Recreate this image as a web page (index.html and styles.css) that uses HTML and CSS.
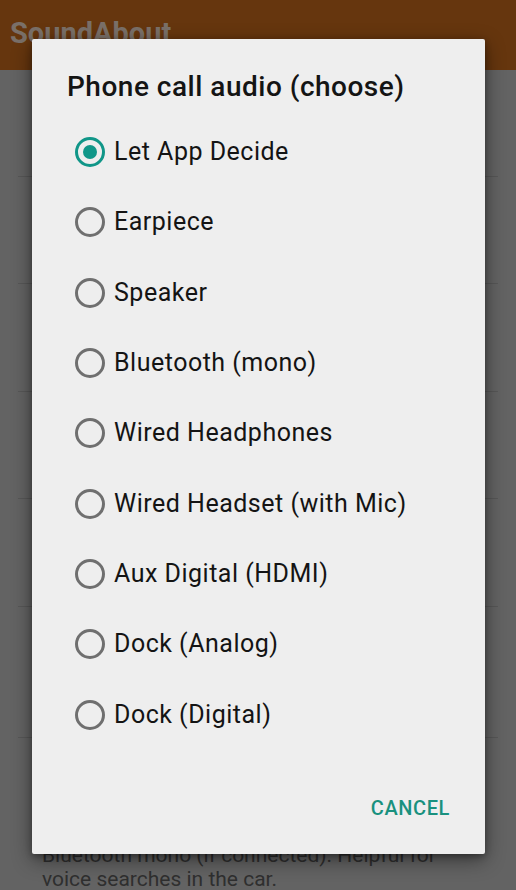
FILE: index.html
```html
<!DOCTYPE html>
<html>
<head>
<meta charset="utf-8">
<link rel="stylesheet" href="styles.css">
</head>
<body>
<div class="screen">
  <header class="appbar"><span class="apptitle">SoundAbout</span></header>
  <div class="list">
    <div class="item h1"></div>
    <div class="item h2"></div>
    <div class="item h3"></div>
    <div class="item h4"></div>
    <div class="item h5"></div>
    <div class="item h6"></div>
    <div class="item last">
      <p class="desc">Bluetooth mono (if connected). Helpful for voice searches in the car.</p>
    </div>
  </div>

  <div class="dialog">
    <h1 class="dtitle">Phone call audio (choose)</h1>
    <ul class="options">
      <li class="opt"><span class="radio checked"></span><span class="label">Let App Decide</span></li>
      <li class="opt"><span class="radio"></span><span class="label">Earpiece</span></li>
      <li class="opt"><span class="radio"></span><span class="label">Speaker</span></li>
      <li class="opt"><span class="radio"></span><span class="label">Bluetooth (mono)</span></li>
      <li class="opt"><span class="radio"></span><span class="label">Wired Headphones</span></li>
      <li class="opt"><span class="radio"></span><span class="label">Wired Headset (with Mic)</span></li>
      <li class="opt"><span class="radio"></span><span class="label">Aux Digital (HDMI)</span></li>
      <li class="opt"><span class="radio"></span><span class="label">Dock (Analog)</span></li>
      <li class="opt"><span class="radio"></span><span class="label">Dock (Digital)</span></li>
    </ul>
    <div class="actions"><span class="cancel">CANCEL</span></div>
  </div>
</div>
</body>
</html>
```

FILE: styles.css
```css
html, body {
  margin: 0;
  padding: 0;
}
body {
  width: 516px;
  height: 890px;
  overflow: hidden;
  background: #626262;
  font-family: Roboto, "Noto Sans", sans-serif;
}
.screen {
  position: relative;
  width: 516px;
  height: 890px;
  overflow: hidden;
  background: #636363;
}
.appbar {
  height: 70px;
  background: #66360e;
  display: flex;
  align-items: flex-start;
  padding-left: 10px;
  box-sizing: border-box;
}
.apptitle {
  font-size: 29px;
  font-weight: 700;
  color: #7a7069;
  line-height: 30px;
  margin-top: 18px;
}
.list {
  display: flex;
  flex-direction: column;
}
.item {
  margin: 0 18px;
  border-bottom: 1px solid #575757;
  box-sizing: border-box;
}
.h1 { height: 107px; }
.h2 { height: 107px; }
.h3 { height: 108px; }
.h4 { height: 107px; }
.h5 { height: 108px; }
.h6 { height: 131px; }
.last {
  border-bottom: none;
  padding: 0 0 0 24px;
}
.desc {
  margin: 105px 0 0 0;
  font-size: 21px;
  line-height: 24px;
  color: #2f2f2f;
  width: 400px;
}
.dialog {
  position: absolute;
  left: 32px;
  top: 39px;
  width: 453px;
  height: 815px;
  background: #eeeeee;
  border-radius: 2px;
  box-shadow: 0 6px 20px rgba(0,0,0,0.45), 0 2px 6px rgba(0,0,0,0.3);
  display: flex;
  flex-direction: column;
}
.dtitle {
  margin: 0;
  padding: 31px 0 0 35px;
  font-size: 28px;
  font-weight: 500;
  line-height: 34px;
  letter-spacing: 0.5px;
  color: #141414;
}
.options {
  list-style: none;
  margin: 0;
  padding: 0;
  margin-top: 13px;
}
.opt {
  height: 70.3px;
  display: flex;
  align-items: center;
  padding-left: 43px;
}
.radio {
  width: 30px;
  height: 30px;
  box-sizing: border-box;
  border: 3px solid #6f6f6f;
  border-radius: 50%;
  flex: none;
  display: flex;
  align-items: center;
  justify-content: center;
}
.radio.checked {
  border-color: #109688;
}
.radio.checked::after {
  content: "";
  width: 14px;
  height: 14px;
  border-radius: 50%;
  background: #109688;
}
.label {
  margin-left: 9px;
  font-size: 25px;
  letter-spacing: 0.5px;
  color: #141414;
  line-height: 30px;
}
.actions {
  margin-top: auto;
  display: flex;
  justify-content: flex-end;
  padding: 0 35px 34px 0;
}
.cancel {
  font-size: 20px;
  font-weight: 500;
  color: #19917f;
  letter-spacing: 0.6px;
  line-height: 24px;
}
```
